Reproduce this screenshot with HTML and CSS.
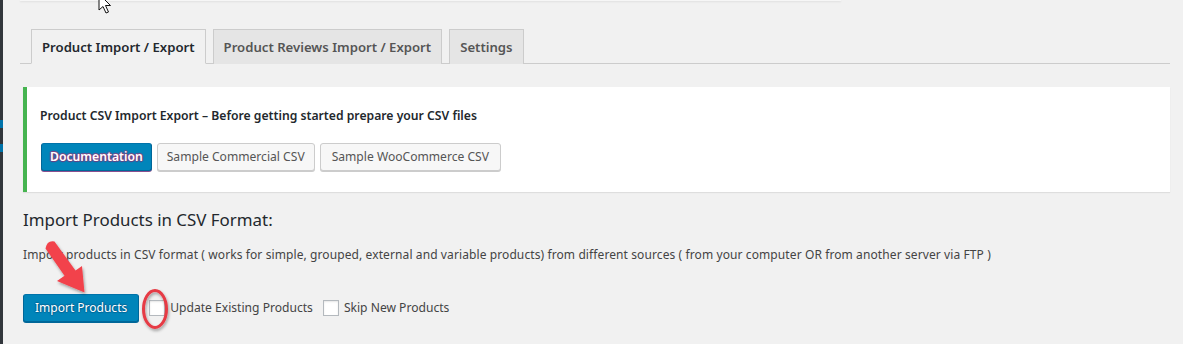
FILE: index.html
```html
<!DOCTYPE html>
<html lang="en">
<head>
    <meta charset="UTF-8">
    <meta name="viewport" content="width=device-width, initial-scale=1.0">
    <title>Product CSV Import Export</title>
    <link rel="stylesheet" href="styles.css">
</head>
<body>
    <!-- Admin menu edge -->
    <div class="menu-edge">
        <span class="menu-mark first"></span>
        <span class="menu-mark"></span>
    </div>

    <div class="wrap">
        <div class="top-notice"></div>

        <!-- Tabs -->
        <nav class="nav-tabs">
            <a class="nav-tab active" href="#">Product Import / Export</a>
            <a class="nav-tab" href="#">Product Reviews Import / Export</a>
            <a class="nav-tab" href="#">Settings</a>
        </nav>

        <!-- Intro notice -->
        <div class="notice">
            <p class="notice-title">Product CSV Import Export &ndash; Before getting started prepare your CSV files</p>
            <div class="notice-actions">
                <a class="button button-primary" href="#">Documentation</a>
                <a class="button" href="#">Sample Commercial CSV</a>
                <a class="button button-wide" href="#">Sample WooCommerce CSV</a>
            </div>
        </div>

        <!-- Import section -->
        <div class="import-section">
            <h2 class="section-title">Import Products in CSV Format:</h2>
            <p class="section-desc">Import products in CSV format ( works for simple, grouped, external and variable products) from different sources ( from your computer OR from another server via FTP )</p>
            <div class="import-row">
                <a class="button button-primary button-large" href="#">Import Products</a>
                <label class="check"><input type="checkbox"> Update Existing Products</label>
                <label class="check"><input type="checkbox"> Skip New Products</label>
            </div>
        </div>
    </div>

    <!-- Screenshot annotations -->
    <svg class="annotations" width="1183" height="344" viewBox="0 0 1183 344">
        <defs>
            <filter id="shade" x="-30%" y="-30%" width="160%" height="160%">
                <feDropShadow dx="1" dy="2" stdDeviation="1.5" flood-color="#000" flood-opacity="0.35"/>
            </filter>
        </defs>
        <!-- mouse cursor -->
        <path d="M99 -6 L99 10 L103 6.5 L106 13 L108.5 12 L105.5 5.5 L110.5 5.5 Z" fill="#fff" stroke="#111" stroke-width="1" stroke-linejoin="round"/>
        <!-- red arrow -->
        <g filter="url(#shade)">
            <path d="M45.5 248.5 Q47 240 54.5 241.5 L75.5 270.5 L82 266 L84.5 292.5 L57 281 L64.5 275.8 Z" fill="#f2434c"/>
            <ellipse cx="155" cy="309" rx="11.5" ry="18.5" fill="none" stroke="#e63a44" stroke-width="3"/>
        </g>
    </svg>
</body>
</html>
```

FILE: styles.css
```css
/* General Styles */
body {
    font-family: "Segoe UI", "Noto Sans", sans-serif;
    font-size: 12px;
    line-height: 1.4;
    background-color: #f1f1f1;
    color: #444;
    margin: 0;
    padding: 0;
    display: flex;
    position: relative;
    min-height: 344px;
}

a {
    text-decoration: none;
}

/* Admin menu edge */
.menu-edge {
    width: 3px;
    background: #32373c;
    display: flex;
    flex-direction: column;
}

.menu-mark {
    display: block;
    height: 8px;
    margin-top: 16px;
    background: #0073aa;
}

.menu-mark.first {
    margin-top: 120px;
}

/* Wrap */
.wrap {
    flex: 1;
    padding: 0 13px 0 17px;
}

.top-notice {
    width: 821px;
    height: 1px;
    background: #f6f6f6;
    box-shadow: 0 1px 2px rgba(0, 0, 0, 0.1);
}

/* Tabs */
.nav-tabs {
    display: flex;
    gap: 7px;
    margin-top: 28px;
    padding-left: 11px;
    border-bottom: 1px solid #ccc;
}

.nav-tab {
    display: block;
    padding: 7px 10px 5px;
    line-height: 21px;
    font-size: 13.15px;
    font-weight: 600;
    color: #555;
    background: #e5e5e5;
    border: 1px solid #ccc;
    border-bottom: none;
    margin-bottom: -1px;
}

.nav-tab.active {
    color: #23282d;
    background: #f1f1f1;
    border-bottom: 1px solid #f1f1f1;
}

/* Notice */
.notice {
    margin: 23px 0 0 3px;
    padding: 19px 12px 21px 13px;
    background: #fff;
    border-left: 4px solid #46b450;
    box-shadow: 0 1px 1px rgba(0, 0, 0, 0.08);
}

.notice-title {
    margin: 0;
    line-height: 20px;
    font-size: 12.2px;
    font-weight: 600;
    color: #23282d;
}

.notice-actions {
    display: flex;
    gap: 5px;
    margin-top: 17px;
    padding-left: 1px;
}

/* Buttons */
.button {
    display: inline-block;
    height: 28px;
    box-sizing: border-box;
    line-height: 26px;
    padding: 0 9px 1px;
    font-size: 12.1px;
    color: #555;
    background: #f7f7f7;
    border: 1px solid #ccc;
    border-radius: 3px;
    box-shadow: 0 1px 0 #ccc;
    white-space: nowrap;
}

.button-wide {
    padding: 0 11px 1px;
}

.button-primary {
    padding: 0 8px 1px;
    background: #0085ba;
    border-color: #0073aa #006799 #006799;
    box-shadow: 0 1px 0 #8a4f8f;
    color: #fff;
    font-size: 12.2px;
    font-weight: 600;
    text-shadow: 0 -1px 1px #8a3f7f, 1px 0 1px #8a3f7f, 0 1px 1px #6b3a80, -1px 0 1px #8a3f7f;
}

.button-large {
    height: 28px;
    line-height: 26px;
    padding: 0 11px;
    font-size: 12px;
    font-weight: 400;
    box-shadow: 0 1px 0 #006799;
    text-shadow: 0 -1px 1px #006799, 1px 0 1px #006799, 0 1px 1px #006799, -1px 0 1px #006799;
}

/* Import section */
.import-section {
    padding-left: 3px;
}

.section-title {
    margin: 16px 0 0;
    font-size: 16.9px;
    line-height: 24px;
    font-weight: 400;
    color: #23282d;
}

.section-desc {
    margin: 13px 0 0;
    line-height: 20px;
    letter-spacing: 0.1px;
}

.import-row {
    display: flex;
    align-items: center;
    margin-top: 29px;
}

.check {
    display: flex;
    align-items: center;
    gap: 5px;
    margin-left: 10px;
    font-size: 12.1px;
    color: #444;
}

.check input {
    appearance: none;
    -webkit-appearance: none;
    width: 16px;
    height: 16px;
    margin: 0;
    background: #fff;
    border: 1px solid #b4b9be;
    box-shadow: inset 0 1px 2px rgba(0, 0, 0, 0.1);
}

/* Annotation overlay */
.annotations {
    position: absolute;
    left: 0;
    top: 0;
    pointer-events: none;
}
```
